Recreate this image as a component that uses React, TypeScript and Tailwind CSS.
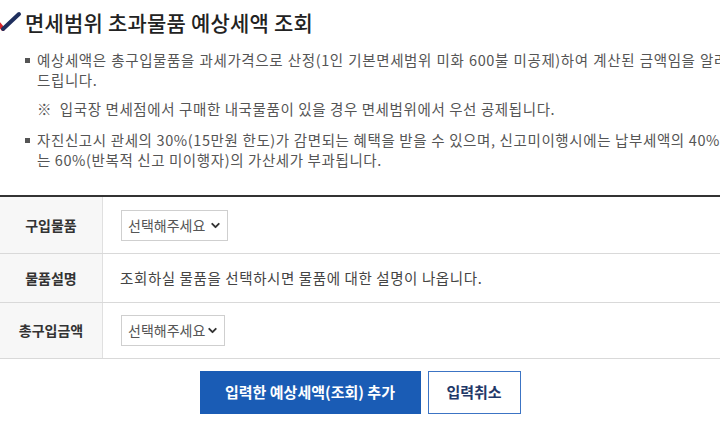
import { ChevronDown } from 'lucide-react';

const FONT = "font-['Noto_Sans_CJK_KR','Noto_Sans',sans-serif]";

// Select box look-alike
function SelectBox({ width }: { width: string }) {
  return (
    <div
      className={`flex h-[31px] items-center justify-between whitespace-nowrap border border-[#cfcfcf] bg-white pl-[6px] pr-[5px] text-[14px] text-[#555] ${width}`}
    >
      <span>선택해주세요</span>
      <ChevronDown className="h-[13px] w-[13px] shrink-0 text-[#333]" strokeWidth={3.5} />
    </div>
  );
}

function CheckIcon() {
  return (
    <svg width="24" height="22" viewBox="0 0 24 22" className="shrink-0">
      <path d="M1 13 L5 18" stroke="#d9262c" strokeWidth="4" strokeLinecap="round" />
      <path d="M5 18 L21 3" stroke="#1f2f5e" strokeWidth="4" strokeLinecap="round" />
    </svg>
  );
}

export default function App() {
  return (
    <div className={`w-[720px] h-[434px] overflow-hidden bg-white ${FONT}`}>
      <div className="w-[760px]">
        {/* Title */}
        <div className="flex items-center gap-[3px] pt-[8px] -ml-[2px]">
          <CheckIcon />
          <h2 className="text-[21px] font-medium text-[#222] leading-[28px] tracking-[0.2px]">
            면세범위 초과물품 예상세액 조회
          </h2>
        </div>

        {/* Notes */}
        <ul className="mt-[14px] pl-[25px] pr-[32px] text-[14.5px] leading-[20px] tracking-[0.6px] text-[#555]">
          <li className="relative pl-[12px] text-justify break-keep">
            <span className="absolute left-0 top-[8px] h-[5px] w-[5px] bg-[#555]" />
            예상세액은 총구입물품을 과세가격으로 산정(1인 기본면세범위 미화 600불 미공제)하여 계산된 금액임을 알려
            드립니다.
          </li>
          <li className="mt-[9px] pl-[12px]">※ &nbsp;입국장 면세점에서 구매한 내국물품이 있을 경우 면세범위에서 우선 공제됩니다.</li>
          <li className="relative mt-[11px] -mr-[10px] pl-[12px] text-justify">
            <span className="absolute left-0 top-[8px] h-[5px] w-[5px] bg-[#555]" />
            자진신고시 관세의 30%(15만원 한도)가 감면되는 혜택을 받을 수 있으며, 신고미이행시에는 납부세액의 40% 또는 60%(반복적 신고 미이행자)의 가산세가 부과됩니다.
          </li>
        </ul>

        {/* Form table */}
        <div className="mt-[25px] border-t-2 border-[#333]">
          <div className="flex h-[57px] border-b border-[#d9d9d9]">
            <div className="flex w-[103px] items-center justify-center border-r border-[#e0e0e0] bg-[#f7f7f7] text-[14px] font-bold text-[#333]">
              구입물품
            </div>
            <div className="flex items-center pl-[18px]">
              <SelectBox width="w-[107px]" />
            </div>
          </div>
          <div className="flex h-[49px] border-b border-[#d9d9d9]">
            <div className="flex w-[103px] items-center justify-center border-r border-[#e0e0e0] bg-[#f7f7f7] text-[14px] font-bold text-[#333]">
              물품설명
            </div>
            <div className="flex items-center pl-[17px] text-[14.5px] tracking-[0.6px] text-[#444]">
              조회하실 물품을 선택하시면 물품에 대한 설명이 나옵니다.
            </div>
          </div>
          <div className="flex h-[56px] border-b border-[#d9d9d9]">
            <div className="flex w-[103px] items-center justify-center border-r border-[#e0e0e0] bg-[#f7f7f7] text-[14px] font-bold text-[#333]">
              총구입금액
            </div>
            <div className="flex items-center pl-[18px]">
              <SelectBox width="w-[104px]" />
            </div>
          </div>
        </div>

        {/* Buttons */}
        <div className="flex w-[720px] justify-center gap-[7px] pt-[12px]">
          <button className="h-[43px] w-[221px] bg-[#1a5cb5] text-[15px] font-bold text-white">
            입력한 예상세액(조회) 추가
          </button>
          <button className="h-[43px] w-[93px] border border-[#3c74c4] bg-white text-[15px] font-bold text-[#1f3868]">
            입력취소
          </button>
        </div>
      </div>
    </div>
  );
}
